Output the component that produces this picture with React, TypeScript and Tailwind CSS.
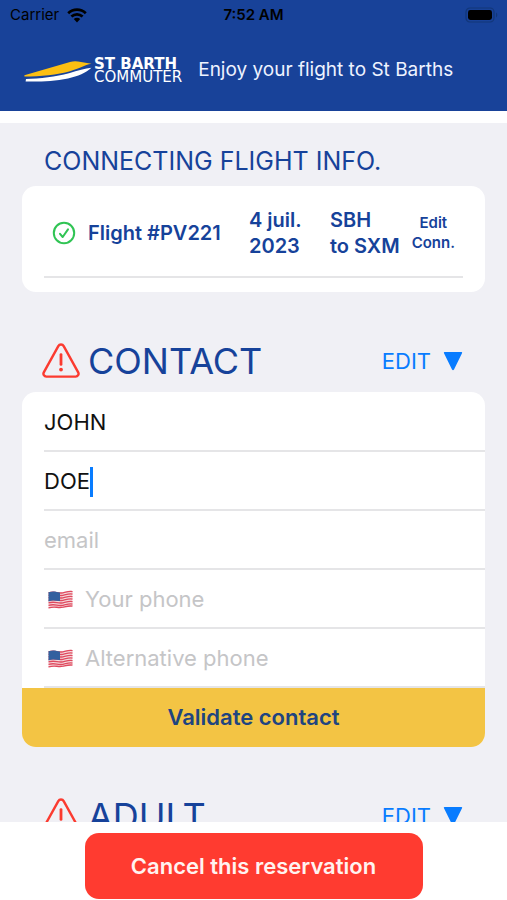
import React from 'react';

function WifiIcon() {
    return (
        <svg viewBox="0 0 20 15" className="h-[15px] w-5" fill="none" stroke="black" strokeWidth="2.7" aria-hidden="true">
            <path d="M1.2 5.2C6.2.4 13.8.4 18.8 5.2" />
            <path d="M4.4 8.6C7.6 5.6 12.4 5.6 15.6 8.6" />
            <path d="M6.8 11.1a4.6 4.6 0 0 1 6.4 0L10 14.4Z" fill="black" stroke="none" />
        </svg>
    );
}

function BatteryIcon() {
    return (
        <svg viewBox="0 0 34 16" className="h-4 w-[34px]" aria-hidden="true">
            <rect x="1" y="1" width="28" height="14" rx="4" fill="none" stroke="#123678" strokeWidth="1.2" />
            <rect x="3" y="3" width="24" height="10" rx="2.4" fill="black" />
            <path d="M31 5.6c1.8.8 1.8 4 0 4.8Z" fill="#123678" />
        </svg>
    );
}

function WingLogo() {
    return (
        <svg viewBox="0 0 68 24" className="h-6 w-[68px]" aria-hidden="true">
            <path d="M2 20C16 19.4 32 17.8 45 14.2C54 11.6 61 9.2 67.5 8.8C62 14 54 17.4 44 19.4C30 22 14 23 1.6 22.4Z" fill="white" />
            <path d="M.4 16.2L46 2.9Q50 1.8 54 2.4L67.5 4.8C60 6.2 56 9.4 46 12.2C34 15.6 16 17.4 .4 17.6Z" fill="#fcbf12" />
        </svg>
    );
}

function CheckIcon() {
    return (
        <svg viewBox="0 0 24 24" className="h-6 w-6" fill="none" stroke="#30c454" strokeWidth="2" strokeLinecap="round" strokeLinejoin="round" aria-hidden="true">
            <circle cx="12" cy="12" r="10.2" />
            <path d="M8 12.8l2.7 3.2L16 8.4" />
        </svg>
    );
}

function WarningIcon() {
    return (
        <svg viewBox="0 0 38 36" className="h-9 w-[38px] shrink-0" fill="none" stroke="#fb3b30" strokeWidth="2.4" strokeLinecap="round" strokeLinejoin="round" aria-hidden="true">
            <path d="M16.3 3.1a3.1 3.1 0 0 1 5.4 0L36.2 29.3a2.9 2.9 0 0 1-2.6 4.3H4.4a2.9 2.9 0 0 1-2.6-4.3Z" />
            <path d="M19 11.6V21.4" strokeWidth="2.8" />
            <circle cx="19" cy="26.6" r="1.9" fill="#fb3b30" stroke="none" />
        </svg>
    );
}

function FlagIcon() {
    return (
        <svg viewBox="0 0 25 19" className="h-[19px] w-[25px] shrink-0" fill="none" aria-hidden="true">
            <path d="M.5 2.2C8 .2 9 3.4 15 2.2C19 1.2 22 .2 24.5 1V16.6C20 15.6 17 17.6 13 17.8C8 18 5 16.8.5 18.4Z" fill="#f6dadd" />
            <g stroke="#df4a5f" strokeWidth="1.35">
                <path d="M.5 2.8C8 .8 9 4 15 2.8C19 1.8 22 .8 24.5 1.6" />
                <path d="M.5 5.3C8 3.3 9 6.5 15 5.3C19 4.3 22 3.3 24.5 4.1" />
                <path d="M.5 7.8C8 5.8 9 9 15 7.8C19 6.8 22 5.8 24.5 6.6" />
                <path d="M.5 10.3C8 8.3 9 11.5 15 10.3C19 9.3 22 8.3 24.5 9.1" />
                <path d="M.5 12.8C8 10.8 9 14 15 12.8C19 11.8 22 10.8 24.5 11.6" />
                <path d="M.5 15.3C8 13.3 9 16.5 15 15.3C19 14.3 22 13.3 24.5 14.1" />
                <path d="M.5 17.8C8 15.8 9 18.3 15 17.2C19 16.3 22 15.4 24.5 16.2" />
            </g>
            <path d="M.5 2.2C6 .6 8.5 2 12 2.6V11C8 11.2 5 9.8.5 11.4Z" fill="#33609f" />
        </svg>
    );
}

interface SectionHeaderProps {
    title: string;
}

function SectionHeader({ title }: SectionHeaderProps) {
    return (
        <div className="flex h-[62px] items-center pl-5 pr-[22px]">
            <WarningIcon />
            <h2 className="ml-2 flex-1 text-4xl text-[#16429a]">{title}</h2>
            <button type="button" className="flex items-center gap-3 text-[22px] text-[#087cff]">
                EDIT
                <svg viewBox="0 0 20 20" className="h-5 w-5" fill="#087cff" aria-hidden="true">
                    <path d="M1.6 1H18.4Q19.6 1 19 2.2L11 18.4Q10 20 9 18.4L1 2.2Q.4 1 1.6 1Z" />
                </svg>
            </button>
        </div>
    );
}

interface FieldProps {
    label: string;
    type?: string;
    value?: string;
    active?: boolean;
    flag?: boolean;
}

function Field({ label, type = 'text', value, active, flag }: FieldProps) {
    return (
        <label className="ml-[22px] flex h-[59px] items-center border-b-2 border-[#e5e5e7] pt-[2px]">
            {flag && <span className="ml-1 mr-3"><FlagIcon /></span>}
            <input
                type={type}
                aria-label={label}
                placeholder={label}
                defaultValue={value}
                className={`h-8 min-w-0 bg-transparent text-[22px] text-[#111111] outline-none placeholder:text-[#c5c5c7] ${active ? '[field-sizing:content]' : 'flex-1'}`}
            />
            {active && <span className="h-[30px] w-[3px] bg-[#087cff]" />}
        </label>
    );
}

export default function App() {
    return (
        <div className="flex h-screen flex-col overflow-hidden bg-white font-['Inter',sans-serif]">
            <header className="shrink-0 bg-[#184299]">
                <div className="grid h-[30px] grid-cols-3 items-center px-2 text-[15px] text-black">
                    <div className="flex items-center gap-2 pl-[2px]">
                        Carrier
                        <WifiIcon />
                    </div>
                    <div className="text-center font-semibold">7:52 AM</div>
                    <div className="flex justify-end">
                        <BatteryIcon />
                    </div>
                </div>
                <div className="flex h-[81px] items-center pl-6">
                    <WingLogo />
                    <div className="ml-[2px] font-['DejaVu_Sans',sans-serif] text-[15px] leading-[13px] text-white">
                        <div className="font-bold">ST BARTH</div>
                        <div>COMMUTER</div>
                    </div>
                    <p className="ml-4 text-[19px] text-[#eef3ff]">Enjoy your flight to St Barths</p>
                </div>
            </header>

            <main className="mt-3 min-h-0 flex-1 overflow-hidden bg-[#f0f0f5] px-[22px]">
                <h2 className="flex h-[63px] items-end pb-[6px] pl-[22px] text-[25px] text-[#16429a]">CONNECTING FLIGHT INFO.</h2>
                <section className="rounded-[14px] bg-white px-[22px] pb-[14px] font-semibold text-[#16429a]">
                    <div className="flex h-[92px] items-center border-b-2 border-[#e5e5e7] pl-2 pt-1 text-xl leading-[26px]">
                        <CheckIcon />
                        <span className="ml-3 w-[161px] whitespace-nowrap">Flight #PV221</span>
                        <span className="w-[81px]">4 juil.<br />2023</span>
                        <span className="flex-1 whitespace-nowrap">SBH<br />to SXM</span>
                        <button type="button" className="mr-2 text-[15px] leading-5">Edit<br />Conn.</button>
                    </div>
                </section>

                <form className="mt-[38px]" onSubmit={(e) => e.preventDefault()}>
                    <SectionHeader title="CONTACT" />
                    <div className="overflow-hidden rounded-[14px] bg-white pt-px">
                        <Field label="First name" value="JOHN" />
                        <Field label="Last name" value="DOE" active />
                        <Field label="email" type="email" />
                        <Field label="Your phone" type="tel" flag />
                        <Field label="Alternative phone" type="tel" flag />
                        <button type="submit" className="h-[59px] w-full bg-[#f3c444] text-[22px] font-semibold text-[#204480]">
                            Validate contact
                        </button>
                    </div>
                </form>

                <section className="mt-[38px]">
                    <SectionHeader title="ADULT" />
                </section>
            </main>

            <footer className="flex shrink-0 justify-center bg-white pb-px pt-[11px]">
                <button type="button" className="h-[66px] w-2/3 rounded-[14px] bg-[#ff3b30] text-[22px] font-semibold text-[#fff3f0]">
                    Cancel this reservation
                </button>
            </footer>
        </div>
    );
}
